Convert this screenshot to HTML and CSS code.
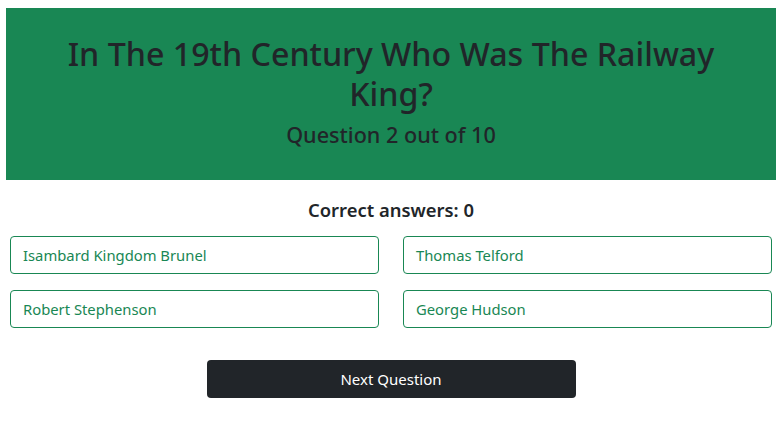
FILE: index.html
```html
<!DOCTYPE html>
<html lang="en">
<head>
<meta charset="utf-8">
<title>Quiz</title>
<link rel="stylesheet" href="styles.css">
</head>
<body>
<div class="page">
  <header class="hero">
    <h1 class="title">In The 19th Century Who Was The Railway King?</h1>
    <h3 class="subtitle">Question 2 out of 10</h3>
  </header>
  <h5 class="score">Correct answers: 0</h5>
  <div class="answers">
    <button class="answer">Isambard Kingdom Brunel</button>
    <button class="answer">Thomas Telford</button>
    <button class="answer">Robert Stephenson</button>
    <button class="answer">George Hudson</button>
  </div>
  <div class="actions">
    <button class="next">Next Question</button>
  </div>
</div>
</body>
</html>
```

FILE: styles.css
```css
* { box-sizing: border-box; }
html, body { margin: 0; padding: 0; background: #fff; }
body {
  font-family: "Noto Sans", "Open Sans", sans-serif;
  color: #212529;
}
.page {
  width: 770px;
  margin: 8px 0 0 6px;
}
.hero {
  background: #198754;
  padding: 26px 48px 16px;
  text-align: center;
  height: 172px;
}
.title {
  margin: 0 0 6px;
  font-size: 32.2px;
  line-height: 40px;
  font-weight: 500;
}
.subtitle {
  margin: 0;
  font-size: 21.6px;
  line-height: 30px;
  font-weight: 500;
}
.score {
  margin: 16px 0 0;
  text-align: center;
  font-size: 18.4px;
  line-height: 28px;
  font-weight: 600;
}
.answers {
  display: grid;
  grid-template-columns: 369px 369px;
  column-gap: 24px;
  row-gap: 16px;
  margin: 12px 0 0 4px;
}
.answer {
  height: 38px;
  border: 1px solid #198754;
  border-radius: 4px;
  background: #fff;
  color: #198754;
  font-family: inherit;
  font-size: 14.8px;
  text-align: left;
  padding: 0 12px;
}
.actions {
  display: flex;
  justify-content: center;
  margin: 32px 0 0 0;
}
.next {
  width: 369px;
  height: 38px;
  border: none;
  border-radius: 4px;
  background: #212529;
  color: #fff;
  font-family: inherit;
  font-size: 15px;
}
```
